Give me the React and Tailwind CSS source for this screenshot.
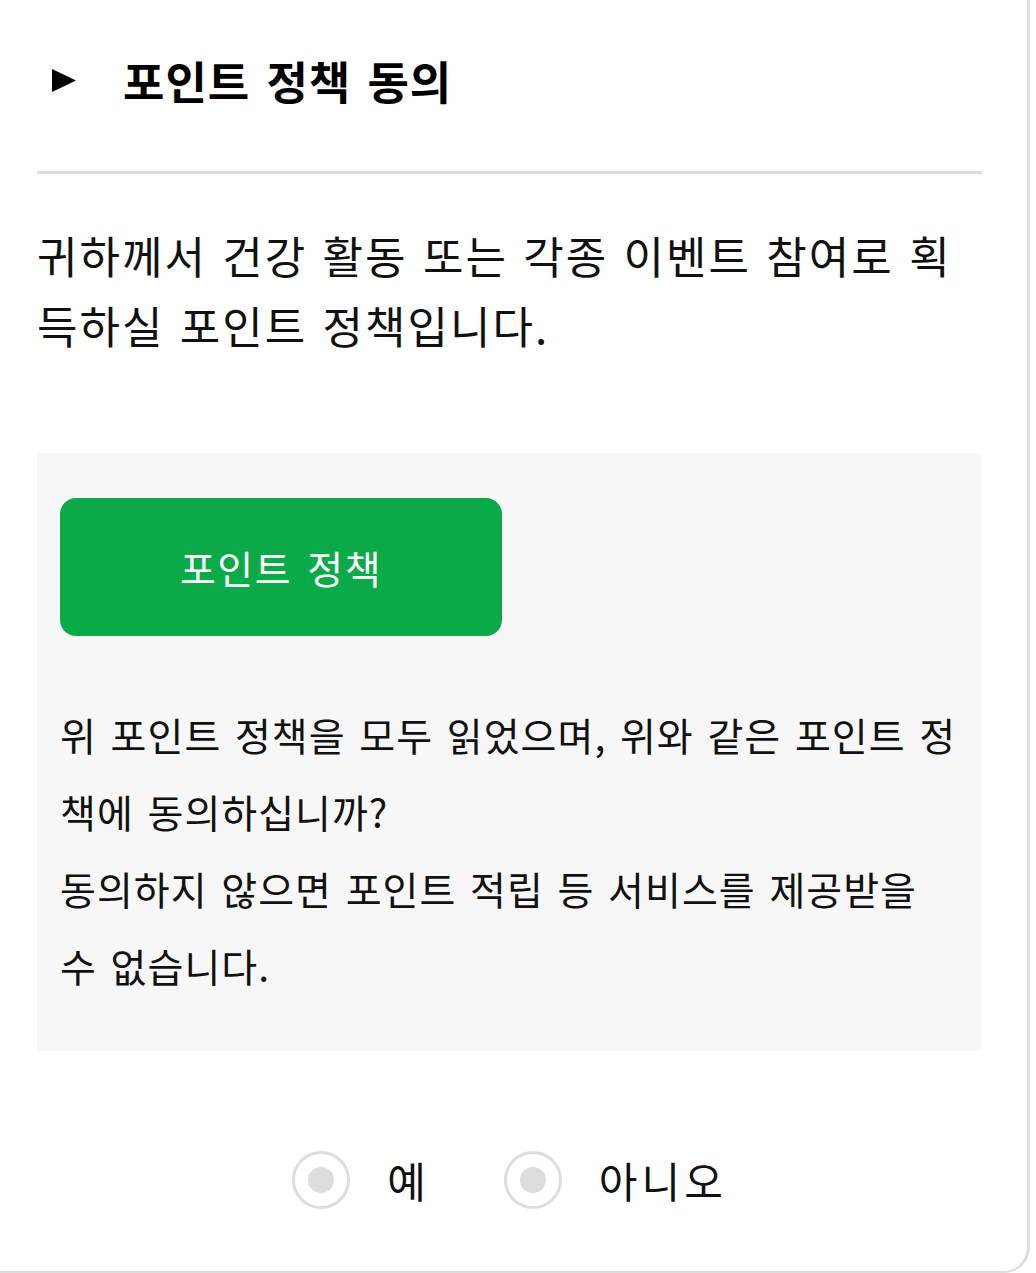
export default function App() {
  return (
    <div
      className="min-h-screen bg-white text-[#111]"
      style={{ fontFamily: '"Noto Sans CJK KR", "Noto Sans", sans-serif' }}
    >
      <div className="h-[1273px] w-[1030px] rounded-br-[26px] border-r-[3px] border-b-[2px] border-[#dddddd] pl-[37px] pr-[45px]">
        {/* section header */}
        <div className="flex h-[160px] items-center pl-[15px]">
          <svg width="24" height="23" viewBox="0 0 24 23" className="shrink-0">
            <path d="M0 0 L24 11.5 L0 23 Z" fill="#000" />
          </svg>
          <h2 className="ml-[47px] text-[45px] font-bold leading-none tracking-[1px] text-black [word-spacing:5px]">
            포인트 정책 동의
          </h2>
        </div>
        <div className="mt-[11px] h-[3px] bg-[#dddddd]" />

        <p className="mt-[46px] text-[44px] leading-[70px] tracking-[2px] [word-spacing:3.5px]">
          귀하께서 건강 활동 또는 각종 이벤트 참여로 획득하실 포인트 정책입니다.
        </p>

        {/* policy box */}
        <div className="mt-[93px] bg-[#f7f7f7] pt-[45px] pb-[47px] pl-[23px] pr-[18px]">
          <button className="flex h-[138px] w-[442px] items-center justify-center rounded-[16px] bg-[#0aaa48] text-[39px] tracking-[1.5px] text-white [word-spacing:5px]">
            포인트 정책
          </button>
          <p className="mt-[60px] text-[39px] leading-[77px] tracking-[1px] [word-spacing:4px]">
            위 포인트 정책을 모두 읽었으며, 위와 같은 포인트 정책에 동의하십니까?
            <br />
            동의하지 않으면 포인트 적립 등 서비스를 제공받을 수 없습니다.
          </p>
        </div>

        {/* agree / disagree */}
        <div className="mt-[97px] flex items-center justify-center">
          <label className="flex items-center">
            <span className="flex h-[58px] w-[58px] items-center justify-center rounded-full border-[3px] border-[#dddddd]">
              <span className="h-[26px] w-[26px] rounded-full bg-[#dddddd]" />
            </span>
            <span className="ml-[37px] text-[42px]">예</span>
          </label>
          <label className="ml-[78px] flex items-center">
            <span className="flex h-[58px] w-[58px] items-center justify-center rounded-full border-[3px] border-[#dddddd]">
              <span className="h-[26px] w-[26px] rounded-full bg-[#dddddd]" />
            </span>
            <span className="ml-[37px] text-[42px] tracking-[4px]">아니오</span>
          </label>
        </div>
      </div>
    </div>
  )
}
